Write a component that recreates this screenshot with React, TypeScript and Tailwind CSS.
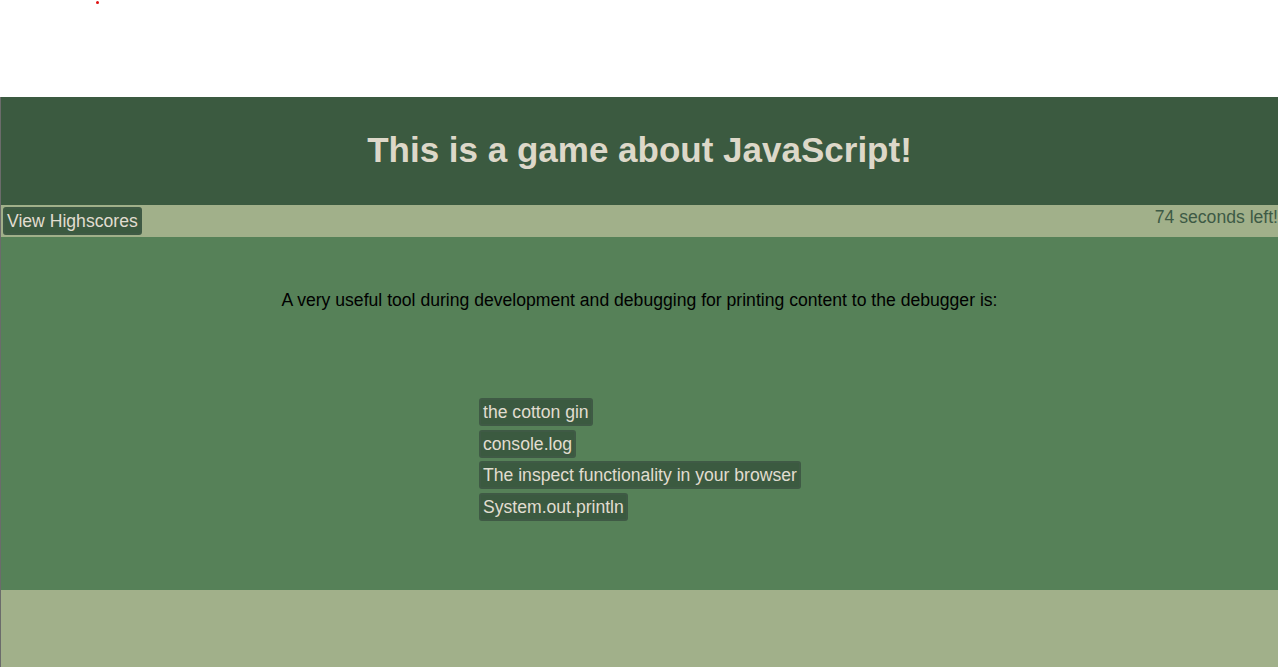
import React from "react";

const answers = [
  "the cotton gin",
  "console.log",
  "The inspect functionality in your browser",
  "System.out.println",
];

const App: React.FC = () => {
  return (
    <div className="min-h-[667px] bg-white font-['Liberation_Sans',Arial,sans-serif]">
      {/* top strip */}
      <div className="h-[97px] pt-[1px]">
        <div className="ml-[96px] w-[3px] h-[3px] rounded-full bg-[#e01010]"></div>
      </div>

      <div className="border-l border-[#6b6b6b]">
        {/* Header */}
        <header className="h-[108px] bg-[#3b5a40] flex items-center justify-center">
          <h1 className="text-[35px] font-bold text-[#ddd8c9] pb-[2px]">
            This is a game about JavaScript!
          </h1>
        </header>

        {/* Bar */}
        <div className="h-[32px] bg-[#a1b08a] flex justify-between items-start pl-[2px]">
          <button className="mt-[2px] h-[28px] px-[2px] rounded-[3px] border-2 border-[#3f5a45] bg-[#3b5a40] text-[17.6px] leading-[22px] text-[#e1ddd0]">
            View Highscores
          </button>
          <span className="mt-[1px] text-[17.6px] leading-[22px] text-[#3d5a45] whitespace-nowrap">
            74 seconds left!
          </span>
        </div>

        {/* Main */}
        <main className="h-[353px] bg-[#568158]">
          <p className="pt-[51px] text-center text-[17.6px] leading-[24px] text-black">
            A very useful tool during development and debugging for printing content to the debugger is:
          </p>
          <ul className="mt-[86px] pl-[478px] flex flex-col items-start gap-[3.6px]">
            {answers.map((a) => (
              <li key={a}>
                <button className="h-[28px] px-[2px] rounded-[3px] border-2 border-[#3f5a45] bg-[#3b5a40] text-[17.6px] leading-[22px] text-[#e1ddd0]">
                  {a}
                </button>
              </li>
            ))}
          </ul>
        </main>

        {/* Footer */}
        <footer className="h-[77px] bg-[#a1b08a]"></footer>
      </div>
    </div>
  );
};

export default App;
